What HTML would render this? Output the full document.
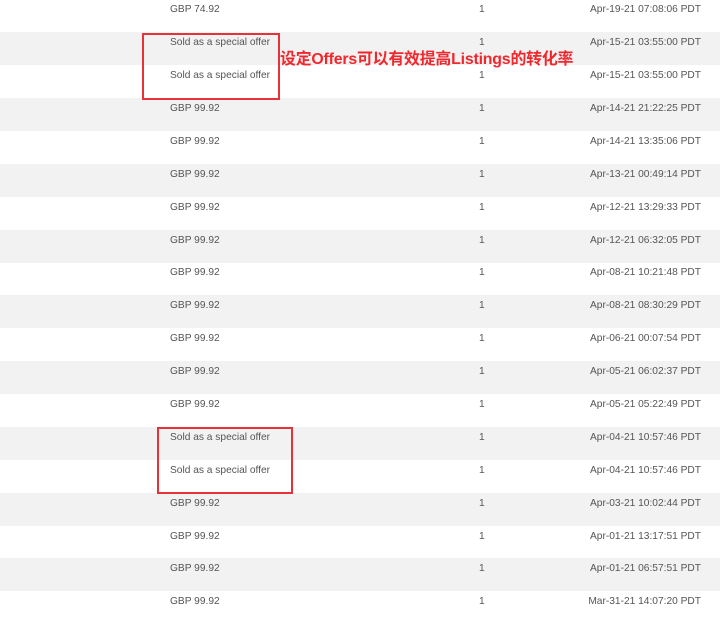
<!DOCTYPE html>
<html><head><meta charset="utf-8"><style>
body{margin:0;width:720px;height:621px;overflow:hidden;background:#fff;font-family:"Liberation Sans",Arial,sans-serif;position:relative}
.r{position:absolute;left:0;width:720px;height:33px;font-size:10.2px;color:#555}
.g{background:#f2f2f2}
.r span{position:absolute;top:5px}
.a{left:170px}.b{left:479px}.c{right:19px}
.box{position:absolute;border:2px solid #e8323a;box-sizing:border-box}
.note{position:absolute;left:280px;top:46px;color:#f0282e;font-weight:bold;font-size:15.9px;font-family:"Liberation Sans","Noto Sans CJK SC",sans-serif;white-space:nowrap;letter-spacing:-0.2px}
</style></head><body>
<div class="r" style="top:-1px"><span class="a">GBP 74.92</span><span class="b">1</span><span class="c">Apr-19-21 07:08:06 PDT</span></div>
<div class="r g" style="top:32px"><span class="a">Sold as a special offer</span><span class="b">1</span><span class="c">Apr-15-21 03:55:00 PDT</span></div>
<div class="r" style="top:65px"><span class="a">Sold as a special offer</span><span class="b">1</span><span class="c">Apr-15-21 03:55:00 PDT</span></div>
<div class="r g" style="top:98px"><span class="a">GBP 99.92</span><span class="b">1</span><span class="c">Apr-14-21 21:22:25 PDT</span></div>
<div class="r" style="top:131px"><span class="a">GBP 99.92</span><span class="b">1</span><span class="c">Apr-14-21 13:35:06 PDT</span></div>
<div class="r g" style="top:164px"><span class="a">GBP 99.92</span><span class="b">1</span><span class="c">Apr-13-21 00:49:14 PDT</span></div>
<div class="r" style="top:197px"><span class="a">GBP 99.92</span><span class="b">1</span><span class="c">Apr-12-21 13:29:33 PDT</span></div>
<div class="r g" style="top:230px"><span class="a">GBP 99.92</span><span class="b">1</span><span class="c">Apr-12-21 06:32:05 PDT</span></div>
<div class="r" style="top:262px"><span class="a">GBP 99.92</span><span class="b">1</span><span class="c">Apr-08-21 10:21:48 PDT</span></div>
<div class="r g" style="top:295px"><span class="a">GBP 99.92</span><span class="b">1</span><span class="c">Apr-08-21 08:30:29 PDT</span></div>
<div class="r" style="top:328px"><span class="a">GBP 99.92</span><span class="b">1</span><span class="c">Apr-06-21 00:07:54 PDT</span></div>
<div class="r g" style="top:361px"><span class="a">GBP 99.92</span><span class="b">1</span><span class="c">Apr-05-21 06:02:37 PDT</span></div>
<div class="r" style="top:394px"><span class="a">GBP 99.92</span><span class="b">1</span><span class="c">Apr-05-21 05:22:49 PDT</span></div>
<div class="r g" style="top:427px"><span class="a">Sold as a special offer</span><span class="b">1</span><span class="c">Apr-04-21 10:57:46 PDT</span></div>
<div class="r" style="top:460px"><span class="a">Sold as a special offer</span><span class="b">1</span><span class="c">Apr-04-21 10:57:46 PDT</span></div>
<div class="r g" style="top:493px"><span class="a">GBP 99.92</span><span class="b">1</span><span class="c">Apr-03-21 10:02:44 PDT</span></div>
<div class="r" style="top:526px"><span class="a">GBP 99.92</span><span class="b">1</span><span class="c">Apr-01-21 13:17:51 PDT</span></div>
<div class="r g" style="top:558px"><span class="a">GBP 99.92</span><span class="b">1</span><span class="c">Apr-01-21 06:57:51 PDT</span></div>
<div class="r" style="top:591px"><span class="a">GBP 99.92</span><span class="b">1</span><span class="c">Mar-31-21 14:07:20 PDT</span></div>
<div class="box" style="left:142px;top:33px;width:138px;height:67px"></div>
<div class="box" style="left:157px;top:427px;width:136px;height:67px"></div>
<div class="note">设定Offers可以有效提高Listings的转化率</div>
</body></html>
